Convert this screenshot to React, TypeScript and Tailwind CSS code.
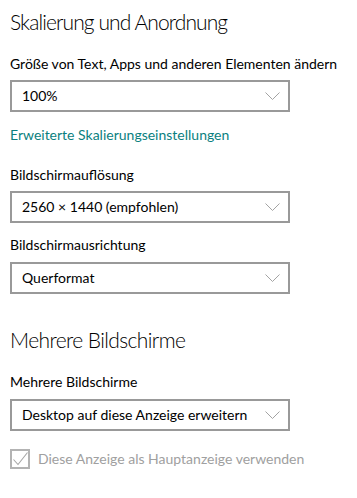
const Chevron = () => (
  <svg width="15" height="8" viewBox="0 0 15 8" className="shrink-0">
    <path d="M0.5 0.5 L7.5 7.5 L14.5 0.5" fill="none" stroke="#a3a3a3" strokeWidth="1" />
  </svg>
)

const Dropdown = ({ value }: { value: string }) => (
  <div className="flex h-[32px] w-[280px] items-center justify-between border-2 border-[#999999] bg-white pl-[10px] pr-[8px]">
    <span className="text-[14px] leading-[20px] text-black">{value}</span>
    <Chevron />
  </div>
)

const Label = ({ children, className = '' }: { children: string; className?: string }) => (
  <div className={`text-[14px] leading-[20px] text-black ${className}`}>{children}</div>
)

export default function App() {
  return (
    <div className="min-h-[498px] w-[357px] bg-white pl-[10px] font-['Lato',sans-serif]">
      <h1 className="pt-[8px] text-[21px] font-light leading-[28px] tracking-[-0.9px] text-black">
        Skalierung und Anordnung
      </h1>
      <Label className="mt-[18px]">Größe von Text, Apps und anderen Elementen ändern</Label>
      <div className="mt-[6px]">
        <Dropdown value="100%" />
      </div>
      <div className="mt-[13px] text-[14px] leading-[20px] text-[#0b7f80]">
        Erweiterte Skalierungseinstellungen
      </div>
      <Label className="mt-[20px]">Bildschirmauflösung</Label>
      <div className="mt-[6px]">
        <Dropdown value="2560 × 1440 (empfohlen)" />
      </div>
      <Label className="mt-[12px]">Bildschirmausrichtung</Label>
      <div className="mt-[7px]">
        <Dropdown value="Querformat" />
      </div>
      <h2 className="mt-[32px] text-[21px] font-light leading-[28px] tracking-[-0.6px] text-black">
        Mehrere Bildschirme
      </h2>
      <Label className="mt-[18px]">Mehrere Bildschirme</Label>
      <div className="mt-[7px]">
        <Dropdown value="Desktop auf diese Anzeige erweitern" />
      </div>
      <div className="mt-[18px] flex items-center gap-[8px]">
        <div className="h-[20px] w-[20px] border-2 border-[#b3b3b3]">
          <svg width="16" height="16" viewBox="0 0 16 16">
            <path d="M1.5 8.5 L6 13.5 L15.5 1.5" fill="none" stroke="#a6a6a6" strokeWidth="1.1" />
          </svg>
        </div>
        <span className="text-[14px] leading-[20px] text-[#a0a0a0]">
          Diese Anzeige als Hauptanzeige verwenden
        </span>
      </div>
    </div>
  )
}
